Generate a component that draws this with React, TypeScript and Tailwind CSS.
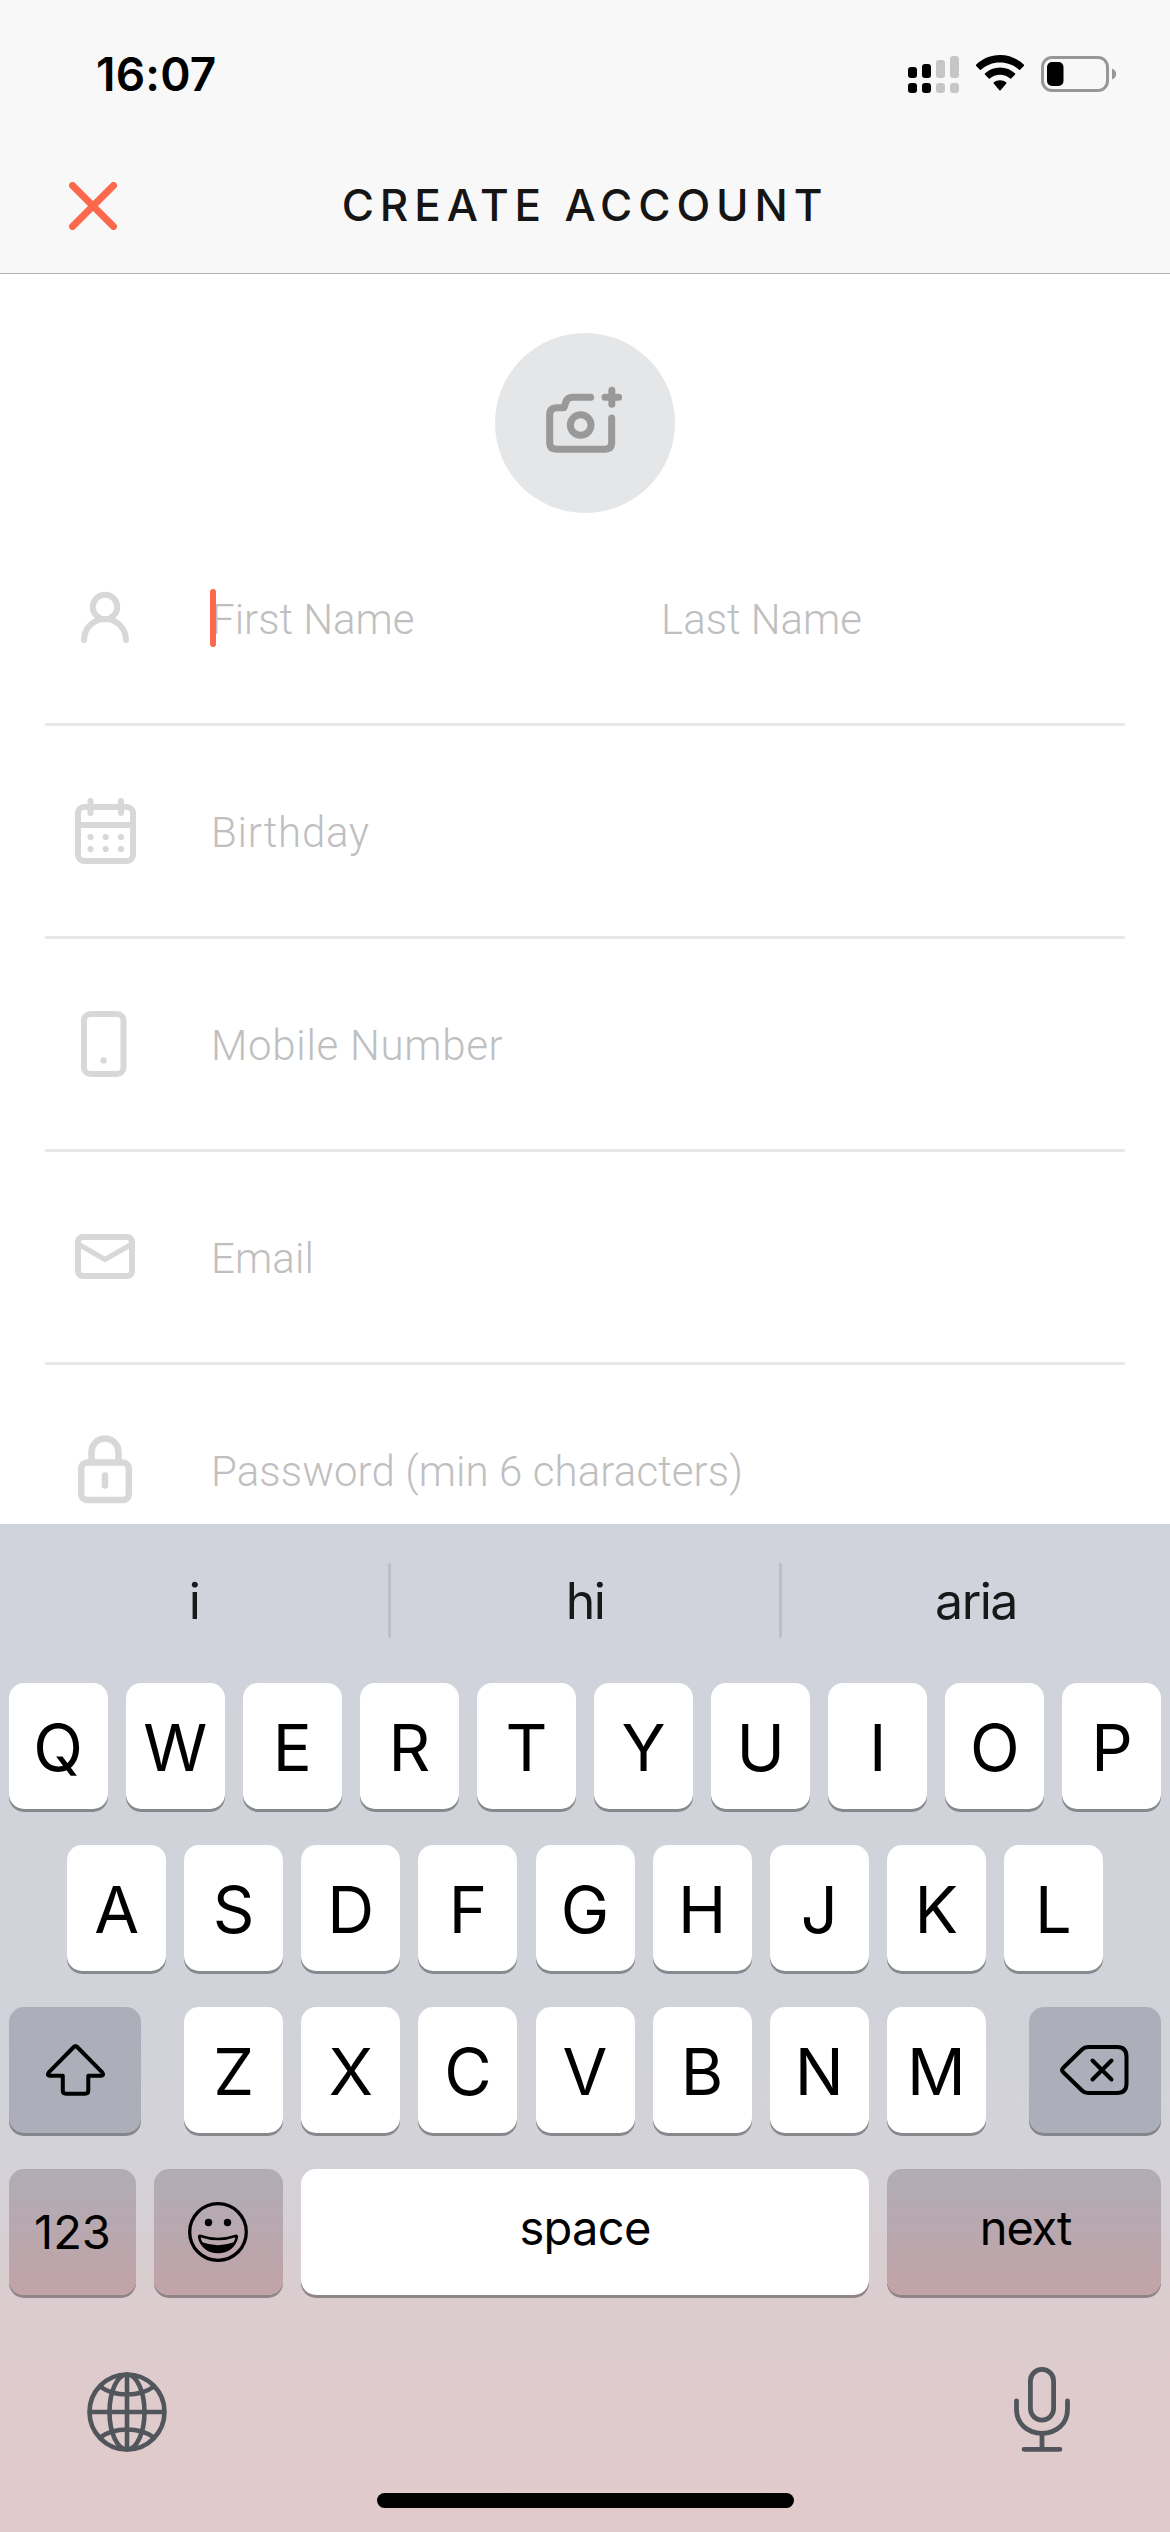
import React from "react";
import clsx from "clsx";

const iconProps = {
  viewBox: "0 0 72 72",
  fill: "none",
  stroke: "#d8d8d8",
  strokeWidth: 6,
  strokeLinecap: "round" as const,
  strokeLinejoin: "round" as const,
  className: "w-[72px] h-[72px] flex-none",
};

function PersonIcon() {
  return (
    <svg {...iconProps}>
      <circle cx="36" cy="25" r="12.2" />
      <path d="M15 58a21 21 0 0 1 42 0" />
    </svg>
  );
}

function CalendarIcon() {
  return (
    <svg {...iconProps}>
      <rect x="9" y="12" width="55" height="54" rx="6" />
      <path d="M9 30h55M21.5 6v12M52 6v12" />
      <g fill="#d8d8d8" stroke="none">
        <circle cx="21.5" cy="42" r="3.1" />
        <circle cx="36.7" cy="42" r="3.1" />
        <circle cx="52" cy="42" r="3.1" />
        <circle cx="21.5" cy="54" r="3.1" />
        <circle cx="36.7" cy="54" r="3.1" />
        <circle cx="52" cy="54" r="3.1" />
      </g>
    </svg>
  );
}

function PhoneIcon() {
  return (
    <svg {...iconProps}>
      <rect x="15" y="6" width="39.5" height="60" rx="6.5" />
      <circle cx="34.6" cy="52.4" r="3.2" fill="#d8d8d8" stroke="none" />
    </svg>
  );
}

function MailIcon() {
  return (
    <svg {...iconProps}>
      <rect x="9" y="16" width="54" height="39" rx="5" />
      <path d="M10 23.5l26 15 26-15" strokeWidth="5" />
    </svg>
  );
}

function LockIcon() {
  return (
    <svg {...iconProps} strokeWidth={6.5}>
      <rect x="12.2" y="28.5" width="47.6" height="37.5" rx="6" />
      <path d="M22.5 28V18a13.5 13.5 0 0 1 27 0V28" />
      <path d="M36 41.5v10" />
    </svg>
  );
}

function StatusBar() {
  return (
    <div className="h-[141px] flex items-center justify-between pl-[96px] pr-[53px] pt-[7px]">
      <div className="text-[46px] leading-none font-semibold tracking-[0.200px] text-black">
        16:07
      </div>
      <div className="flex items-center">
        <svg viewBox="0 0 52 38" className="w-[52px] h-[38px] mt-px">
          <g fill="#000">
            <rect x="0" y="11" width="9" height="11" rx="3" />
            <rect x="14" y="8" width="9" height="14" rx="3" />
            <rect x="0" y="27" width="9" height="10" rx="3" />
            <rect x="14" y="27" width="9" height="10" rx="3" />
          </g>
          <g fill="#c6c6c6">
            <rect x="28" y="4" width="9" height="18" rx="3" />
            <rect x="42" y="0" width="9" height="22" rx="3" />
            <rect x="28" y="27" width="9" height="10" rx="3" />
            <rect x="42" y="27" width="9" height="10" rx="3" />
          </g>
        </svg>
        <svg viewBox="0 0 48 36" className="w-[48px] h-[36px] ml-[16px] -mt-[2px]">
          <path d="M24 0C14.700 0 6.300 3.700 0 9.700c-.3.300-.3.800 0 1.100l3.900 3.900c.3.300.7.300 1 0C10 10 16.700 7.400 24 7.400S38 10 43.100 14.700c.3.300.7.300 1 0L48 10.800c.3-.3.300-.8 0-1.100C41.700 3.700 33.300 0 24 0z" />
          <path d="M24 12.600c-5.800 0-11.100 2.200-15.100 5.900-.3.300-.3.800 0 1.100l3.900 4c.3.300.7.300 1 0 2.700-2.400 6.300-3.800 10.200-3.800s7.500 1.400 10.200 3.800c.3.300.7.300 1 0l3.900-4c.3-.3.300-.8 0-1.100-4-3.700-9.300-5.900-15.100-5.900z" />
          <path d="M24 25.200c-2.400 0-4.600.9-6.300 2.300-.3.300-.4.800 0 1.100l5.700 6.600c.3.400.9.400 1.200 0l5.700-6.600c.4-.3.300-.8 0-1.100-1.700-1.400-3.900-2.300-6.300-2.300z" />
        </svg>
        <svg viewBox="0 0 76 36" className="w-[76px] h-[36px] ml-[17px]">
          <rect x="1.500" y="1.500" width="65" height="33" rx="9.500" fill="none" stroke="#979797" strokeWidth="3" />
          <rect x="6" y="6" width="16.500" height="24" rx="5" />
          <path d="M71 12.500c2.500 1 4.200 3 4.200 5.500s-1.700 4.500-4.200 5.500z" fill="#979797" />
        </svg>
      </div>
    </div>
  );
}

function Header() {
  return (
    <div className="h-[274px] bg-[#f8f8f8] border-b border-[#b2b2b2]">
      <StatusBar />
      <div className="h-[132px] grid grid-cols-[186px_1fr_186px] items-center pb-[2px]">
        <svg
          viewBox="0 0 48 48"
          className="w-[48px] h-[48px] ml-[69px]"
          fill="none"
          stroke="#fb684b"
          strokeWidth="7"
          strokeLinecap="round"
        >
          <path d="M3.500 3.500l41 41M44.500 3.500l-41 41" />
        </svg>
        <div className="text-center text-[44px] leading-none font-medium tracking-[5.900px] text-[#151515] whitespace-nowrap pb-[3px]">
          CREATE ACCOUNT
        </div>
      </div>
    </div>
  );
}

function PhotoButton() {
  return (
    <div className="pt-[59px] flex justify-center">
      <div className="w-[180px] h-[180px] rounded-full bg-[#e5e6e8]">
        <svg
          viewBox="105 69 540 540"
          fill="none"
          stroke="#999"
          strokeWidth="21"
          strokeLinecap="round"
          strokeLinejoin="round"
        >
          <path d="M392 262H338Q322 262 318 275L312 293H291Q269 293 269 315V397Q269 418 290 418H434Q455 418 455 397V324" />
          <circle cx="362" cy="345" r="31" />
          <path d="M435 262h41M455.500 241v42" />
        </svg>
      </div>
    </div>
  );
}

type FieldProps = {
  icon: React.ReactNode;
  children: React.ReactNode;
  className?: string;
};

function Field({ icon, children, className }: FieldProps) {
  return (
    <div className="h-[213px] flex-none flex items-center pl-[24px] border-b-3 border-[#e8e8e8]">
      {icon}
      <div
        className={clsx(
          "flex-1 flex ml-[70px] pt-[4px] font-['Roboto','Inter',sans-serif] text-[42px] leading-[58px] font-light text-[#bfbfc1] whitespace-nowrap",
          className
        )}
      >
        {children}
      </div>
    </div>
  );
}

function Form() {
  return (
    <div className="h-[1011px] overflow-hidden px-[45px]">
      <Field icon={<PersonIcon />} className="tracking-normal">
        <div className="relative w-[450px]">
          First Name
          <div className="absolute -left-px -top-[2px] w-[6px] h-[58px] rounded-full bg-[#fb684b]"></div>
        </div>
        <div>Last Name</div>
      </Field>
      <Field icon={<CalendarIcon />} className="tracking-[0.8px]">
        Birthday
      </Field>
      <Field icon={<PhoneIcon />} className="tracking-[0.7px]">
        Mobile Number
      </Field>
      <Field icon={<MailIcon />} className="tracking-[0.1px]">
        Email
      </Field>
      <Field icon={<LockIcon />} className="tracking-[0.1px]">
        Password (min 6 characters)
      </Field>
    </div>
  );
}

type KeyProps = {
  children: React.ReactNode;
  className?: string;
};

function Key({ children, className }: KeyProps) {
  return (
    <div
      className={clsx(
        "h-[126px] flex-none flex items-center justify-center rounded-[15px] leading-none text-black",
        className
      )}
    >
      {children}
    </div>
  );
}

function Letters({ letters }: { letters: string }) {
  return (
    <div className="flex justify-center gap-[18.1px]">
      {letters.split("").map((letter) => (
        <Key
          key={letter}
          className="w-[99px] bg-white text-[65px] pt-[3px] shadow-[0_3px_0_#88898d]"
        >
          {letter}
        </Key>
      ))}
    </div>
  );
}

function Suggestions() {
  return (
    <div className="h-[159px] flex items-center text-[50px] leading-none tracking-[-1.500px] text-[#17181a] pb-[6px]">
      <div className="flex-1 text-center">i</div>
      <div className="w-[3px] h-[75px] rounded-full bg-[#bbbfc8]"></div>
      <div className="flex-1 text-center">hi</div>
      <div className="w-[3px] h-[75px] rounded-full bg-[#bbbfc8]"></div>
      <div className="flex-1 text-center">aria</div>
    </div>
  );
}

function ShiftIcon() {
  return (
    <svg
      viewBox="0 0 59 52"
      className="w-[59px] h-[52px]"
      fill="none"
      stroke="#000"
      strokeWidth="4"
      strokeLinejoin="round"
    >
      <path d="M27.800 3Q29.500 1.300 31.200 3L56 28.200Q58.500 31.700 55 31.700H42.300V46.500Q42.300 49.700 39 49.700H20Q16.800 49.700 16.800 46.500V31.700H4Q.500 31.700 3 28.200Z" />
    </svg>
  );
}

function DeleteIcon() {
  return (
    <svg
      viewBox="0 0 69 50"
      className="w-[69px] h-[50px] -ml-[2px]"
      fill="none"
      stroke="#000"
      strokeWidth="4"
      strokeLinecap="round"
      strokeLinejoin="round"
    >
      <path d="M28 2H57Q66.500 2 66.500 11.500V38.500Q66.500 48 57 48H28Q24.500 48 22 45.500L3 27Q1.200 25 3 23L22 4.500Q24.500 2 28 2Z" />
      <path d="M32.500 15.500l19 19M51.500 15.500l-19 19" />
    </svg>
  );
}

function SmileyIcon() {
  return (
    <svg viewBox="0 0 60 60" className="w-[60px] h-[60px] -ml-px">
      <circle cx="30" cy="30" r="28.300" fill="none" stroke="#000" strokeWidth="3.300" />
      <circle cx="20.500" cy="20.500" r="3.700" />
      <circle cx="39.500" cy="20.500" r="3.700" />
      <path
        d="M12.500 34Q30 40 47.500 34Q49.200 33.500 48.700 35.500C47 44 39.500 50 30 50S13 44 11.300 35.500Q10.800 33.500 12.500 34Z"
        fill="none"
        stroke="#000"
        strokeWidth="2.600"
        strokeLinejoin="round"
      />
      <path d="M13.500 40Q30 46.500 46.500 40C43.500 47 37.500 50.500 30 50.500S16.500 47 13.500 40Z" />
    </svg>
  );
}

function GlobeIcon() {
  return (
    <svg
      viewBox="0 0 80 80"
      className="w-[80px] h-[80px]"
      fill="none"
      stroke="#50565b"
      strokeWidth="4.600"
    >
      <circle cx="40" cy="40" r="37.500" />
      <ellipse cx="40" cy="40" rx="17.500" ry="37.500" />
      <path d="M40 2.500v75M2.500 40h75" />
      <path d="M13 14.500Q24 22.500 40 22.500T67 14.500M13 65.500Q24 57.500 40 57.500T67 65.500" />
    </svg>
  );
}

function MicIcon() {
  return (
    <svg
      viewBox="0 0 56 85"
      className="w-[56px] h-[85px]"
      fill="none"
      stroke="#50565b"
      strokeWidth="4.800"
      strokeLinecap="round"
    >
      <rect x="16.400" y="2.400" width="23.200" height="50.800" rx="11.600" />
      <path d="M2.500 34v8c0 14.500 10.500 24.300 25.500 24.300S53.500 56.500 53.500 42v-8" />
      <path d="M28 67v15M10 82.300h36" />
    </svg>
  );
}

function Keyboard() {
  return (
    <div className="h-[1008px] bg-[linear-gradient(to_bottom,#d0d3dc_0px,#d1d3da_450px,#d3d2d8_640px,#d8ced2_730px,#dccccf_790px,#dfcbcc_880px,#e2caca_1008px)]">
      <Suggestions />
      <div className="px-[9px] flex flex-col gap-[36px]">
        <Letters letters="QWERTYUIOP" />
        <Letters letters="ASDFGHJKL" />
        <div className="flex justify-between">
          <Key className="w-[132px] bg-[#acafba] shadow-[0_3px_0_#85868d]">
            <ShiftIcon />
          </Key>
          <Letters letters="ZXCVBNM" />
          <Key className="w-[132px] bg-[#acafba] shadow-[0_3px_0_#85868d]">
            <DeleteIcon />
          </Key>
        </div>
        <div className="flex justify-between">
          <Key className="w-[127px] text-[47px] pb-px bg-linear-to-b from-[#b0acb6] to-[#c1a3a7] shadow-[0_3px_0_#8f8487]">
            123
          </Key>
          <Key className="w-[129px] bg-linear-to-b from-[#b0acb6] to-[#c1a3a7] shadow-[0_3px_0_#8f8487]">
            <SmileyIcon />
          </Key>
          <Key className="w-[568px] text-[47px] tracking-[-0.700px] pb-[10px] bg-white shadow-[0_3px_0_#8f8688]">
            space
          </Key>
          <Key className="w-[274px] text-[47px] tracking-[-1.200px] pl-[3px] pb-[10px] bg-linear-to-b from-[#b0acb6] to-[#c1a3a7] shadow-[0_3px_0_#8f8487]">
            next
          </Key>
        </div>
      </div>
      <div className="flex justify-between items-end h-[157px] pl-[87px] pr-[100px]">
        <GlobeIcon />
        <MicIcon />
      </div>
      <div className="mx-auto mt-[41px] w-[417px] h-[15px] rounded-full bg-black"></div>
    </div>
  );
}

export default function App() {
  return (
    <div className="w-[1170px] h-[2532px] overflow-hidden bg-white font-['Inter','Liberation_Sans',sans-serif]">
      <Header />
      <PhotoButton />
      <Form />
      <Keyboard />
    </div>
  );
}
